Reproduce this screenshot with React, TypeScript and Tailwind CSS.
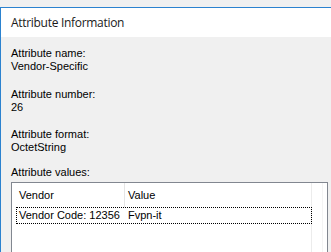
const rows = [{ vendor: "Vendor Code: 12356", value: "Fvpn-it" }];

const App = () => {
    return (
        <div className="w-[331px] h-[252px] overflow-hidden bg-[#f0f0f0] text-black" style={{ fontFamily: '"Liberation Sans", Arial, sans-serif' }}>
            <div className="h-[7px] bg-[#f0f0f0]"></div>
            <div className="h-[245px] border-t border-l border-[#2b82cf] flex flex-col">
                <div className="shrink-0 h-[29px] bg-white flex items-center pl-[10px] text-[12px] text-[#1a1a1a]" style={{ fontFamily: '"Open Sans", "Noto Sans", sans-serif', letterSpacing: "-0.3px" }}>
                    Attribute Information
                </div>
                <div className="shrink-0 flex flex-col pl-[10px] pr-[3px] pt-[10px] text-[11px] leading-[13px]">
                    <p>Attribute name:</p>
                    <p>Vendor-Specific</p>
                    <p className="mt-[15px]">Attribute number:</p>
                    <p>26</p>
                    <p className="mt-[14px]">Attribute format:</p>
                    <p>OctetString</p>
                    <p className="mt-[12px]">Attribute values:</p>
                    <div className="shrink-0 mt-[3px] h-[90px] border border-[#828790] bg-white flex">
                        <div className="w-[300px] h-full flex flex-col border-r border-[#ececec]">
                            <div className="flex h-[24px] items-center text-[11px]">
                                <div className="w-[113px] h-full pl-[7px] flex items-center border-r border-[#e5e5e5]">Vendor</div>
                                <div className="pl-[3px] flex items-center">Value</div>
                            </div>
                            {rows.map(r => (
                                <div key={r.vendor} className="ml-[4px] w-[296px] h-[17px] flex items-center border border-dotted border-black">
                                    <div className="w-[108px] pl-[2px]">{r.vendor}</div>
                                    <div className="pl-[3px]">{r.value}</div>
                                </div>
                            ))}
                        </div>
                        <div className="w-[11px] h-full border-r border-[#f4f4f4]"></div>
                    </div>
                </div>
            </div>
        </div>
    );
};

export default App;
